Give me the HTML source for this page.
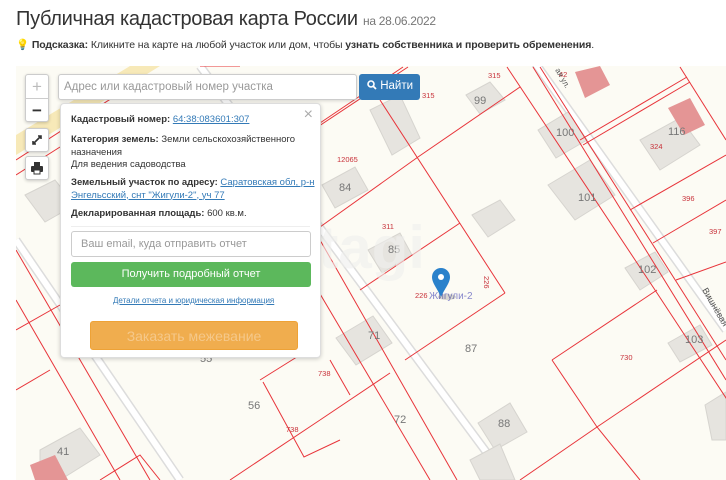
<!DOCTYPE html>
<html><head><meta charset="utf-8"><style>
*{box-sizing:border-box;margin:0;padding:0}
body{width:726px;height:480px;overflow:hidden;background:#fff;font-family:"Liberation Sans",sans-serif;color:#333;position:relative}
h1{position:absolute;left:16px;top:8px;font-size:20px;font-weight:normal;color:#333;letter-spacing:-0.3px;white-space:nowrap}
h1 small{font-size:12px;color:#777}
.hint{position:absolute;left:16px;top:38px;font-size:10.5px;white-space:nowrap;letter-spacing:-0.1px}
#map{position:absolute;left:16px;top:66px;width:710px;height:414px;background:#fcfbf4;overflow:hidden}
.ctl{position:absolute;left:25px;width:24px;background:#fff;border:1px solid #ccc;border-radius:3px;box-shadow:0 1px 3px rgba(0,0,0,.2);text-align:center;color:#333}
.inp{position:absolute;left:58px;top:74px;width:299px;height:26px;border:1px solid #ccc;border-radius:3px;background:#fff;font-size:11.5px;color:#999;padding:6px 5px;box-shadow:0 1px 3px rgba(0,0,0,.15)}
.btn{position:absolute;left:359px;top:74px;width:61px;height:26px;background:#337ab7;border-radius:3px;color:#fff;font-size:11.5px;padding:6px 0 0 8px}
.pop{position:absolute;left:60px;top:103px;width:261px;height:255px;background:#fff;border:1px solid #ddd;border-radius:4px;box-shadow:0 1px 4px rgba(0,0,0,.2);font-size:9.5px;color:#333;padding:0 10px}
.pop p{position:absolute;left:10px;line-height:12.5px;white-space:nowrap}
.pop a{color:#337ab7;text-decoration:underline}
b{font-weight:bold}
</style></head><body>
<h1>Публичная кадастровая карта России <small>на 28.06.2022</small></h1>
<div class="hint"><span style="color:#f0c030">💡</span> <b>Подсказка:</b> Кликните на карте на любой участок или дом, чтобы <b>узнать собственника и проверить обременения</b>.</div>
<div id="map">
<svg width="710" height="414" viewBox="16 66 710 414" xmlns="http://www.w3.org/2000/svg" style="position:absolute;left:0;top:0">
<path d="M16 135 L130 66 L160 66 L16 155Z" fill="#f7e9b8"/>
<g stroke="#dcdcdc" stroke-width="9" fill="none"><path d="M200 66 L507 480"/><path d="M533 60 L726 330"/><path d="M16 240 L180 480"/></g>
<g stroke="#fff" stroke-width="6" fill="none"><path d="M200 66 L507 480"/><path d="M533 60 L726 330"/><path d="M16 240 L180 480"/></g>
<g fill="#e6e4df" stroke="#d6d4cf" stroke-width="1">
<polygon points="466,95 490,82 505,100 480,114"/>
<polygon points="538,130 568,112 587,140 556,158"/>
<polygon points="548,185 590,160 615,195 575,220"/>
<polygon points="640,140 680,118 700,145 660,170"/>
<polygon points="625,268 655,252 668,272 640,290"/>
<polygon points="668,343 700,325 712,345 680,362"/>
<polygon points="322,185 355,167 368,190 335,208"/>
<polygon points="368,250 400,233 412,255 382,273"/>
<polygon points="472,215 500,200 515,220 488,237"/>
<polygon points="336,338 373,316 392,343 356,365"/>
<polygon points="478,423 510,403 527,432 495,450"/>
<polygon points="705,405 726,392 726,440 712,440"/>
<polygon points="40,450 80,428 100,455 60,480 40,480"/>
<polygon points="25,195 55,180 75,205 45,222"/>
<polygon points="370,110 400,95 420,138 392,155"/>
<polygon points="470,460 500,444 515,480 480,480"/>
</g>
<g fill="#e49595"><polygon points="575,72 600,66 610,85 585,98"/><polygon points="668,108 690,98 705,125 684,135"/><polygon points="30,465 55,455 68,480 35,480"/><polygon points="80,84 100,74 110,92 92,100"/></g>
<g stroke="#e8343a" stroke-width="1" fill="none">
<path d="M320 123 L403 67"/><path d="M316 128 L408 67"/>
<path d="M418 157 L520 87"/><path d="M320 227 L418 157"/>
<path d="M360 290 L460 223"/><path d="M405 360 L505 293"/>
<path d="M320 420 L390 373"/><path d="M552 360 L657 290"/>
<path d="M597 427 L726 340"/><path d="M520 480 L597 427"/>
<path d="M580 140 L687 77"/><path d="M583 145 L690 82"/>
<path d="M630 210 L726 155"/><path d="M653 243 L726 200"/><path d="M676 280 L726 262"/>
<path d="M380 100 L505 293"/><path d="M507 67 L655 290 L780 480"/>
<path d="M533 67 L726 380"/><path d="M540 67 L726 360"/>
<path d="M320 240 L457 480"/><path d="M300 260 L430 480"/>
<path d="M552 360 L597 427 L640 480"/><path d="M680 67 L726 140"/>
<path d="M16 160 L140 80"/><path d="M16 175 L60 147"/>
<path d="M16 250 L150 480"/><path d="M16 300 L120 480"/>
<path d="M16 330 L60 305"/><path d="M16 390 L50 370"/>
<path d="M100 480 L140 455 L160 480"/>
<path d="M230 480 L320 420"/><path d="M260 380 L300 355"/>
<path d="M263 382 L304 457 L340 440"/>
<path d="M200 66 L240 66"/><path d="M330 360 L350 395"/>
</g>
<g font-family="Liberation Sans" font-size="7.5" fill="#c8323a">
<text x="488" y="78">315</text><text x="422" y="98">315</text><text x="337" y="162">12065</text><text x="382" y="229">311</text><text x="415" y="298">226</text><text x="620" y="360">730</text><text x="650" y="149">324</text><text x="682" y="201">396</text><text x="709" y="234">397</text><text x="318" y="376">738</text><text x="286" y="432">738</text><text x="559" y="77">42</text><text x="477" y="283" transform="rotate(90 484 283)">226</text>
</g>
<g font-family="Liberation Sans" font-size="11" fill="#777">
<text x="474" y="104">99</text><text x="556" y="136">100</text><text x="578" y="201">101</text><text x="668" y="135">116</text><text x="638" y="273">102</text><text x="685" y="343">103</text><text x="339" y="191">84</text><text x="388" y="253">85</text><text x="368" y="339">71</text><text x="465" y="352">87</text><text x="394" y="423">72</text><text x="498" y="427">88</text><text x="248" y="409">56</text><text x="57" y="455">41</text><text x="200" y="362">55</text>
</g>
<text x="429" y="299" font-family="Liberation Sans" font-size="10" fill="#8888cc">Жигули-2</text>
<text x="702" y="290" font-family="Liberation Sans" font-size="9" fill="#555" transform="rotate(60 702 290)">Вишнёвая</text>
<text x="555" y="70" font-family="Liberation Sans" font-size="8" fill="#555" transform="rotate(60 555 70)">ая ул.</text>
<text x="285" y="268" font-family="Liberation Sans" font-size="60" font-weight="bold" fill="#f0f0ee" opacity=".6">etagi</text>
<ellipse cx="447" cy="297" rx="9" ry="3" fill="rgba(0,0,0,.15)"/>
<path d="M441 297 C437 288 432 283 432 277 A9 9 0 0 1 450 277 C450 283 445 288 441 297Z" fill="#2a81cb"/>
<circle cx="441" cy="277" r="3" fill="#fff"/>
</svg>
</div>
<div class="ctl" style="top:74px;height:48px;font-size:17px;line-height:23px"><div style="color:#bbb;border-bottom:1px solid #ccc;height:24px">+</div><div style="font-weight:bold">−</div></div>
<div class="ctl" style="top:128px;height:24px"><svg width="22" height="22" viewBox="0 0 22 22"><path d="M7 15 L15 7 M12 7 H15 V10 M10 15 H7 V12" stroke="#333" stroke-width="1.6" fill="none"/></svg></div>
<div class="ctl" style="top:156px;height:24px"><svg width="22" height="22" viewBox="0 0 22 22"><rect x="8" y="5" width="6" height="4" fill="#333"/><rect x="5" y="9" width="12" height="6" rx="1" fill="#333"/><rect x="8" y="13" width="6" height="4" fill="#fff" stroke="#333"/></svg></div>
<div class="inp">Адрес или кадастровый номер участка</div>
<div class="btn"><svg width="10" height="10" viewBox="0 0 10 10" style="vertical-align:-1px"><circle cx="4" cy="4" r="3" stroke="#fff" stroke-width="1.6" fill="none"/><path d="M6 6 L9 9" stroke="#fff" stroke-width="1.8"/></svg> Найти</div>
<div class="pop">
<div style="position:absolute;right:7px;top:2px;font-size:16px;color:#aaa">×</div>
<p style="top:10px"><b>Кадастровый номер:</b> <a>64:38:083601:307</a></p>
<p style="top:30px"><b>Категория земель:</b> Земли сельскохозяйственного<br>назначения<br>Для ведения садоводства</p>
<p style="top:73px"><b>Земельный участок по адресу:</b> <a>Саратовская обл, р-н<br>Энгельсский, снт "Жигули-2", уч 77</a></p>
<p style="top:104px"><b>Декларированная площадь:</b> 600 кв.м.</p>
<div style="position:absolute;left:10px;right:10px;top:122px;border-top:1px solid #eee"></div>
<div style="position:absolute;left:10px;top:127px;width:240px;height:26px;border:1px solid #ccc;border-radius:3px;font-size:11px;color:#999;padding:6px 9px">Ваш email, куда отправить отчет</div>
<div style="position:absolute;left:10px;top:158px;width:240px;height:25px;background:#5cb85c;border-radius:3px;color:#fff;font-size:11px;text-align:center;line-height:25px">Получить подробный отчет</div>
<p style="top:191px;left:52px;font-size:8px"><a>Детали отчета и юридическая информация</a></p>
<div style="position:absolute;left:29px;top:217px;width:208px;height:29px;background:#f0ad4e;border:1px solid #eea236;border-radius:3px;color:#f5c88a;font-size:14px;text-align:center;line-height:28px">Заказать межевание</div>
</div>
</body></html>
